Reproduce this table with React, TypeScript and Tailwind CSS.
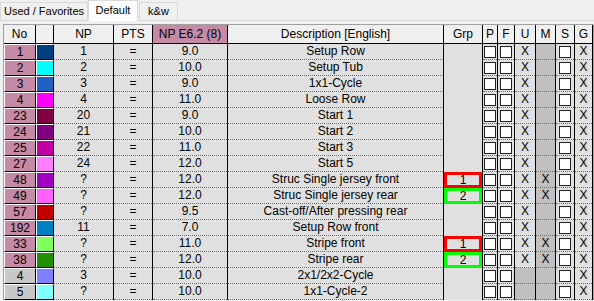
import React from "react";

type Row = {
  no: string;
  gray?: boolean;
  color: string;
  np: string;
  e: string;
  desc: string;
  grp?: 1 | 2;
  u: boolean;
  m: boolean;
};

const rows: Row[] = [
  { no: "1", color: "#00407f", np: "1", e: "9.0", desc: "Setup Row", u: true, m: false },
  { no: "2", color: "#00ffff", np: "2", e: "10.0", desc: "Setup Tub", u: true, m: false },
  { no: "3", color: "#2060c0", np: "3", e: "9.0", desc: "1x1-Cycle", u: true, m: false },
  { no: "4", color: "#ff00ff", np: "4", e: "11.0", desc: "Loose Row", u: true, m: false },
  { no: "23", color: "#800040", np: "20", e: "9.0", desc: "Start 1", u: true, m: false },
  { no: "24", color: "#800080", np: "21", e: "10.0", desc: "Start 2", u: true, m: false },
  { no: "25", color: "#c000a0", np: "22", e: "11.0", desc: "Start 3", u: true, m: false },
  { no: "27", color: "#ff80ff", np: "24", e: "12.0", desc: "Start 5", u: true, m: false },
  { no: "48", color: "#a000c0", np: "?", e: "12.0", desc: "Struc Single jersey front", grp: 1, u: true, m: true },
  { no: "49", color: "#ff60ff", np: "?", e: "12.0", desc: "Struc Single jersey rear", grp: 2, u: true, m: true },
  { no: "57", color: "#c00000", np: "?", e: "9.5", desc: "Cast-off/After pressing rear", u: true, m: false },
  { no: "192", color: "#0080c0", np: "11", e: "7.0", desc: "Setup Row front", u: true, m: false },
  { no: "33", color: "#80ff60", np: "?", e: "11.0", desc: "Stripe front", grp: 1, u: true, m: true },
  { no: "38", color: "#209000", np: "?", e: "12.0", desc: "Stripe rear", grp: 2, u: true, m: true },
  { no: "4", gray: true, color: "#8080ff", np: "3", e: "10.0", desc: "2x1/2x2-Cycle", u: false, m: false },
  { no: "5", gray: true, color: "#80ffff", np: "?", e: "10.0", desc: "1x1-Cycle-2", u: false, m: false },
];

const GRID =
  "grid grid-cols-[32px_18px_60px_39px_75px_216px_39px_15px_17px_21px_20px_19px_18px]";

function DCell({
  children,
  bg = "bg-[#e0e0e0]",
  dotted = true,
}: {
  children?: React.ReactNode;
  bg?: string;
  dotted?: boolean;
}) {
  return (
    <div className={`h-[16px] border-r border-black flex flex-col ${bg}`}>
      <div className="h-[15px] flex items-center justify-center leading-[15px]">{children}</div>
      {dotted ? (
        <div className="h-px border-t border-dotted border-[#707070]" />
      ) : (
        <div className="h-px" />
      )}
    </div>
  );
}

function Box() {
  return <div className="w-[12px] h-[12px] bg-white border border-[#222]" />;
}

function HCell({ children, pink }: { children?: React.ReactNode; pink?: boolean }) {
  return (
    <div
      className={`h-[19px] border-r border-b border-black flex items-center justify-center ${
        pink ? "bg-[#c68aa6]" : "bg-[#f0f0f0]"
      }`}
    >
      {children}
    </div>
  );
}

export default function App() {
  return (
    <div className="w-[594px] h-[301px] overflow-hidden bg-[#f0f0f0] text-black font-['Liberation_Sans',Arial,sans-serif] text-[12px]">
      {/* tab strip */}
      <div className="flex items-end h-[21px] border-b border-[#d9d9d9] text-[11px]">
        <div className="w-[88px] h-[18px] border-t border-l border-r border-[#d9d9d9] bg-[#f0f0f0] flex items-center justify-center">
          Used / Favorites
        </div>
        <div className="relative -mb-px w-[50px] h-[21px] border-t border-l border-r border-[#d9d9d9] bg-white flex justify-center pt-[1px]">
          Default
        </div>
        <div className="ml-px w-[39px] h-[18px] border-t border-l border-r border-[#d9d9d9] bg-[#f0f0f0] flex items-center justify-center">
          k&amp;w
        </div>
      </div>
      {/* panel */}
      <div className="pl-[3px] pt-[3px]">
        <div className="border-l border-t border-r border-[#a0a0a0]">
          {/* header */}
          <div className={GRID}>
            <HCell>No</HCell>
            <HCell />
            <HCell>NP</HCell>
            <HCell>PTS</HCell>
            <HCell pink>NP E6.2 (8)</HCell>
            <HCell>Description [English]</HCell>
            <HCell>Grp</HCell>
            <HCell>P</HCell>
            <HCell>F</HCell>
            <HCell>U</HCell>
            <HCell>M</HCell>
            <HCell>S</HCell>
            <HCell>G</HCell>
          </div>
          {rows.map((r, i) => (
            <div key={i} className={GRID}>
              <div
                className={`h-[16px] border-l border-t border-l-white border-t-white border-b border-r border-b-black border-r-black flex items-center justify-center leading-[14px] ${
                  r.gray ? "bg-[#c8c8c8]" : "bg-[#c68aa6]"
                }`}
              >
                {r.no}
              </div>
              <div className="h-[16px] border-l border-t border-l-white border-t-white border-b border-r border-b-black border-r-black">
                <div className="w-full h-full" style={{ backgroundColor: r.color }} />
              </div>
              <DCell>{r.np}</DCell>
              <DCell>=</DCell>
              <DCell>{r.e}</DCell>
              <DCell>{r.desc}</DCell>
              <div className="h-[16px] border-r border-black bg-[#e0e0e0]">
                {r.grp ? (
                  <div
                    className={`w-full h-full border-[3px] flex items-center justify-center leading-[10px] ${
                      r.grp === 1 ? "border-[#ff0000]" : "border-[#00ff00]"
                    }`}
                  >
                    {r.grp}
                  </div>
                ) : null}
              </div>
              <DCell>
                <Box />
              </DCell>
              <DCell>
                <Box />
              </DCell>
              <DCell bg={r.u ? "bg-[#e0e0e0]" : "bg-[#c0c0c0]"}>{r.u ? "X" : ""}</DCell>
              <DCell bg="bg-[#c0c0c0]">{r.m ? "X" : ""}</DCell>
              <DCell>
                <Box />
              </DCell>
              <DCell>X</DCell>
            </div>
          ))}
        </div>
      </div>
    </div>
  );
}
